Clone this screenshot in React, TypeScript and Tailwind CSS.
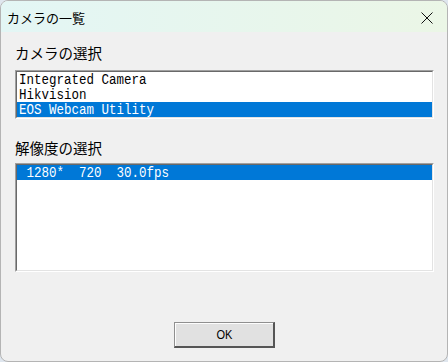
import React from "react";

const mono = { fontFamily: '"Liberation Mono", "DejaVu Sans Mono", monospace' };
const jp = { fontFamily: '"Noto Sans CJK JP", "Noto Sans", sans-serif' };

function Row({ text, selected }: { text: string; selected?: boolean }) {
  return (
    <div
      className={`h-[15px] pl-[2px] overflow-hidden flex items-center text-[12.5px] leading-[14px] ${selected ? "bg-[#0078d7] text-white" : "text-black"}`}
      style={mono}
    >
      <span className="scale-y-[1.18] whitespace-pre leading-[14px]">
        {text}
      </span>
    </div>
  );
}

function ListBox({ h, children }: { h: string; children: React.ReactNode }) {
  return (
    <div className={`${h} border border-t-[#a0a0a0] border-l-[#a0a0a0] border-r-white border-b-white`}>
      <div className="h-full border border-t-[#696969] border-l-[#696969] border-r-[#e3e3e3] border-b-[#e3e3e3] bg-white overflow-hidden">
        {children}
      </div>
    </div>
  );
}

export default function App() {
  return (
    <div className="w-[448px] h-[362px] bg-[#dfe6ee]">
      <div className="w-[448px] h-[362px] rounded-[8px] overflow-hidden border border-[#b4b4b4] bg-[#f0f0f0] flex flex-col">
        <div className="h-[31px] shrink-0 flex items-center justify-between bg-gradient-to-r from-[#e3f6f5] to-[#ebf6e6] pl-[6px] pr-[14px]">
          <span className="text-[13px] text-black leading-none mt-[2px]" style={jp}>
            カメラの一覧
          </span>
          <svg width="12" height="12" viewBox="0 0 12 12" className="mt-[3px]">
            <path d="M0.5 0.5 L11.5 11.5 M11.5 0.5 L0.5 11.5" stroke="#111" strokeWidth="1" fill="none" />
          </svg>
        </div>
        <div className="flex flex-col pl-[14px] pr-[13px]">
          <div className="mt-[12px] h-[17px] text-[14.5px] leading-[17px] text-black" style={jp}>
            カメラの選択
          </div>
          <div className="mt-[9px]">
            <ListBox h="h-[49px]">
              <Row text="Integrated Camera" />
              <Row text="Hikvision" />
              <Row text="EOS Webcam Utility" selected />
            </ListBox>
          </div>
          <div className="mt-[20px] h-[17px] text-[14.5px] leading-[17px] text-black" style={jp}>
            解像度の選択
          </div>
          <div className="mt-[7px]">
            <ListBox h="h-[109px]">
              <Row text=" 1280*  720  30.0fps" selected />
            </ListBox>
          </div>
          <div className="mt-[50px] flex justify-center">
            <button className="w-[101px] h-[26px] bg-[#e1e1e1] border-t border-l border-[#8f8f8f] border-r-2 border-b-2 border-r-[#555] border-b-[#555] shadow-[inset_1px_1px_0_#fdfdfd] flex items-center justify-center">
              <span className="text-[13px] leading-none text-black scale-x-[0.85] inline-block" style={{ fontFamily: '"Liberation Sans", Arial, sans-serif' }}>
                OK
              </span>
            </button>
          </div>
        </div>
      </div>
    </div>
  );
}
